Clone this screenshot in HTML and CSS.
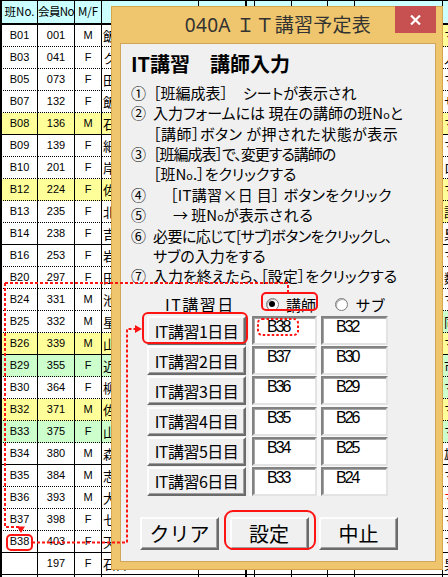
FILE: index.html
```html
<!DOCTYPE html>
<html lang="ja">
<head>
<meta charset="utf-8">
<title>040A ＩＴ講習予定表</title>
<link rel="stylesheet" href="styles.css">
</head>
<body>
<div class="sheet">
  <div class="r h"><span>班No.</span><span class="hn">会員No</span><span>M/F</span><span></span><span></span><span class="gap"></span><span></span><span></span><span></span><span></span><span class="x"></span></div>
  <div class="r"><span>B01</span><span>001</span><span>M</span><span class="nm">飯田</span><span></span><span class="gap"></span><span></span><span></span><span></span><span></span><span class="x y">マ</span></div>
  <div class="r"><span>B03</span><span>041</span><span>F</span><span class="nm">クロ</span><span></span><span class="gap"></span><span></span><span></span><span></span><span></span><span class="x">人</span></div>
  <div class="r"><span>B05</span><span>073</span><span>F</span><span class="nm">田中</span><span></span><span class="gap"></span><span></span><span></span><span></span><span></span><span class="x">マ</span></div>
  <div class="r"><span>B07</span><span>132</span><span>F</span><span class="nm">飯島</span><span></span><span class="gap"></span><span></span><span></span><span></span><span></span><span class="x">サ</span></div>
  <div class="r y s"><span>B08</span><span>136</span><span>M</span><span class="nm">石川</span><span></span><span class="gap"></span><span></span><span></span><span></span><span></span><span class="x">マ</span></div>
  <div class="r"><span>B09</span><span>139</span><span>F</span><span class="nm">細川</span><span></span><span class="gap"></span><span></span><span></span><span></span><span></span><span class="x">マ</span></div>
  <div class="r"><span>B10</span><span>201</span><span>F</span><span class="nm">岸本</span><span></span><span class="gap"></span><span></span><span></span><span></span><span></span><span class="x">ロ</span></div>
  <div class="r y"><span>B12</span><span>224</span><span>F</span><span class="nm">佐藤</span><span></span><span class="gap"></span><span></span><span></span><span></span><span></span><span class="x">マ</span></div>
  <div class="r"><span>B13</span><span>235</span><span>F</span><span class="nm">北村</span><span></span><span class="gap"></span><span></span><span></span><span></span><span></span><span class="x y">設</span></div>
  <div class="r s"><span>B14</span><span>238</span><span>F</span><span class="nm">吉田</span><span></span><span class="gap"></span><span></span><span></span><span></span><span></span><span class="x">梟</span></div>
  <div class="r"><span>B16</span><span>253</span><span>F</span><span class="nm">岩田</span><span></span><span class="gap"></span><span></span><span></span><span></span><span></span><span class="x">マ</span></div>
  <div class="r"><span>B20</span><span>297</span><span>F</span><span class="nm">田村</span><span></span><span class="gap"></span><span></span><span></span><span></span><span></span><span class="x">数</span></div>
  <div class="r"><span>B24</span><span>331</span><span>M</span><span class="nm">池田</span><span></span><span class="gap"></span><span></span><span></span><span></span><span></span><span class="x">マ</span></div>
  <div class="r"><span>B25</span><span>332</span><span>M</span><span class="nm">星野</span><span></span><span class="gap"></span><span></span><span></span><span></span><span></span><span class="x g">同</span></div>
  <div class="r y s"><span>B26</span><span>339</span><span>M</span><span class="nm">山田</span><span></span><span class="gap"></span><span></span><span></span><span></span><span></span><span class="x">マ</span></div>
  <div class="r g"><span>B29</span><span>355</span><span>F</span><span class="nm">近藤</span><span></span><span class="gap"></span><span></span><span></span><span></span><span></span><span class="x g">市</span></div>
  <div class="r"><span>B30</span><span>364</span><span>F</span><span class="nm">柳田</span><span></span><span class="gap"></span><span></span><span></span><span></span><span></span><span class="x g">マ</span></div>
  <div class="r y"><span>B32</span><span>371</span><span>M</span><span class="nm">佐々木</span><span></span><span class="gap"></span><span></span><span></span><span></span><span></span><span class="x">マ</span></div>
  <div class="r g"><span>B33</span><span>375</span><span>F</span><span class="nm">山本</span><span></span><span class="gap"></span><span></span><span></span><span></span><span></span><span class="x">マ</span></div>
  <div class="r s"><span>B34</span><span>380</span><span>M</span><span class="nm">森田</span><span></span><span class="gap"></span><span></span><span></span><span></span><span></span><span class="x">雄</span></div>
  <div class="r"><span>B35</span><span>384</span><span>M</span><span class="nm">志村</span><span></span><span class="gap"></span><span></span><span></span><span></span><span></span><span class="x">マ</span></div>
  <div class="r"><span>B36</span><span>393</span><span>M</span><span class="nm">大野</span><span></span><span class="gap"></span><span></span><span></span><span></span><span></span><span class="x red">マ</span></div>
  <div class="r"><span>B37</span><span>398</span><span>F</span><span class="nm">七海</span><span></span><span class="gap"></span><span></span><span></span><span></span><span></span><span class="x">マ</span></div>
  <div class="r s"><span>B38</span><span>403</span><span>F</span><span class="nm">天野</span><span></span><span class="gap"></span><span></span><span></span><span></span><span></span><span class="x">マ</span></div>
  <div class="r s"><span></span><span>197</span><span>F</span><span class="nm">石井</span><span></span><span class="gap"></span><span></span><span></span><span></span><span></span><span class="x">男</span></div>
  <div class="r"><span></span><span></span><span></span><span class="nm"></span><span></span><span class="gap"></span><span></span><span></span><span></span><span></span><span class="x"></span></div>
</div>

<div class="dlg">
  <div class="bar">
    <span class="title">040A ＩＴ講習予定表</span>
    <span class="close"><svg width="11" height="10" viewBox="0 0 11 10"><path d="M1 .5L10 9.5M10 .5L1 9.5" stroke="#fff" stroke-width="2.2" fill="none"/></svg></span>
  </div>
  <div class="client">
    <h1 class="head">IT講習　講師入力</h1>
    <div class="steps">
      <p><i>①</i><span>［班編成表］　シートが表示され</span></p>
      <p><i>②</i><span>入力フォームには 現在の講師の班N<span class="o">o</span>と</span></p>
      <p><i></i><span class="wide">［講師］ボタン が押された状態が表示</span></p>
      <p><i>③</i><span class="tight">［班編成表］で、変更する講師の</span></p>
      <p><i></i><span>［班N<span class="o">o</span>.］をクリックする</span></p>
      <p><i>④</i><span class="ind4">［IT講習×日 目］ ボタンをクリック</span></p>
      <p><i>⑤</i><span class="ind5">→ 班N<span class="o">o</span>が表示される</span></p>
      <p><i>⑥</i><span class="snug">必要に応じて[サブ]ボタンをクリックし、</span></p>
      <p><i></i><span>サブの入力をする</span></p>
      <p><i>⑦</i><span>入力を終えたら、［設定］をクリックする</span></p>
    </div>
    <div class="opts">
      <span class="lbl">IT講習日</span>
      <span class="rd r1"><span class="dot on"></span>講師</span>
      <span class="rd"><span class="dot"></span>サブ</span>
    </div>
    <div class="days">
      <button class="btn day">IT講習1日目</button><span class="tb a">B38</span><span class="tb b">B32</span>
      <button class="btn day">IT講習2日目</button><span class="tb a">B37</span><span class="tb b">B30</span>
      <button class="btn day">IT講習3日目</button><span class="tb a">B36</span><span class="tb b">B29</span>
      <button class="btn day">IT講習4日目</button><span class="tb a">B35</span><span class="tb b">B26</span>
      <button class="btn day">IT講習5日目</button><span class="tb a">B34</span><span class="tb b">B25</span>
      <button class="btn day">IT講習6日目</button><span class="tb a">B33</span><span class="tb b">B24</span>
    </div>
    <div class="acts">
      <button class="btn act">クリア</button>
      <button class="btn act">設定</button>
      <button class="btn act">中止</button>
    </div>
  </div>
</div>

<svg class="marks" width="448" height="577" viewBox="0 0 448 577">
  <g fill="none" stroke="#ff1414" stroke-width="2">
    <path d="M5 283H288V292" stroke-dasharray="3 2"/>
    <path d="M5 283V527H21V528" stroke-dasharray="3 2"/>
    <path d="M32 542.5H127V329H136" stroke-dasharray="3 2"/>
    <rect x="7" y="535" width="25" height="15" rx="4"/>
    <rect x="143" y="313" width="104" height="30" rx="5"/>
    <rect x="258" y="319" width="40" height="16" rx="4" stroke-dasharray="2.5 2"/>
    <rect x="262" y="293" width="55" height="17" rx="4"/>
    <rect x="225" y="511" width="90" height="38" rx="8"/>
  </g>
  <path d="M17 526.5H25L21 533Z" fill="#ff1414"/>
  <path d="M135 325V333L142 329Z" fill="#ff1414"/>
</svg>
</body>
</html>
```

FILE: styles.css
```css
html, body { margin: 0; padding: 0; }
body {
  width: 448px;
  height: 577px;
  overflow: hidden;
  position: relative;
  background: #fff;
  color: #000;
  font-family: "Noto Sans CJK JP", sans-serif;
}

/* spreadsheet */
.sheet { width: 448px; overflow: hidden; }
.r {
  display: grid;
  grid-template-columns: 38px 37px 27px 97px 47px 9px 37px 36px 27px 88px 5px;
  height: 22px;
}
.r > span {
  box-sizing: border-box;
  border-right: 1px solid #000;
  border-bottom: 1px dotted #000;
  display: flex;
  align-items: center;
  justify-content: center;
  font: 11px/1 "Liberation Sans", "Noto Sans CJK JP", sans-serif;
  white-space: nowrap;
  overflow: hidden;
}
.r > span:first-child { border-left: 2px solid #000; }
.r > span:last-child { border-right: 0; }
.r > span.gap { border-left: 1px solid #000; }
.r > span.nm, .r > span.x {
  justify-content: flex-start;
  padding-left: 1px;
  font: 13px/1 "Noto Sans CJK JP", sans-serif;
}
.r.s > span { border-bottom-style: solid; }
.r.h {
  height: 25px;
  box-sizing: border-box;
  border-top: 1px solid #000;
  background: #ccffff;
}
.r.h > span {
  border-bottom: 2px solid #000;
  font: 11.5px/1 "Noto Sans CJK JP", sans-serif;
}
.r.h > span.hn { letter-spacing: -.6px; }
.r.y { background: #ffff99; }
.r.g { background: #ccffcc; }
.r > span.x.y { background: #ffff99; }
.r > span.x.g { background: #ccffcc; }
.r > span.x.red { color: #f00; }

/* dialog window */
.dlg {
  position: absolute;
  left: 111px;
  top: 6px;
  width: 332px;
  height: 564px;
  box-sizing: border-box;
  background: #efc66d;
  border: 1px solid #d6a64c;
  padding: 0 6px 7px 8px;
  display: flex;
  flex-direction: column;
}
.bar {
  height: 36px;
  flex: none;
  position: relative;
  display: flex;
  align-items: center;
  justify-content: center;
}
.title {
  font: 19px/1 "Noto Sans", "Noto Sans CJK JP", sans-serif;
  letter-spacing: .3px;
  color: #323232;
}
.close {
  position: absolute;
  right: 0;
  top: -1px;
  width: 41px;
  height: 27px;
  background: #c75050;
  display: flex;
  align-items: center;
  justify-content: center;
}
.client {
  flex: 1;
  background: #f0f0f0;
  border: 1px solid #cfa65a;
  display: flex;
  flex-direction: column;
}
.head {
  margin: 8px 0 0 10px;
  font-size: 20px;
  line-height: 24px;
  font-weight: 700;
}
.steps {
  margin: 6.5px 0 0 10px;
  font-size: 15px;
  line-height: 20px;
  font-feature-settings: "palt";
}
.steps p { margin: 0; display: flex; white-space: nowrap; }
.steps i {
  font-style: normal;
  width: 22px;
  flex: none;
  font-feature-settings: normal;
}
.o { font-size: .72em; }
.wide { letter-spacing: .5px; }
.tight { letter-spacing: -1px; }
.snug { letter-spacing: -.55px; }
.ind4 { padding-left: 17px; letter-spacing: .3px; }
.ind5 { padding-left: 20px; font-feature-settings: normal; }

.opts {
  display: flex;
  align-items: center;
  height: 20px;
  margin: 8.5px 0 0 44px;
  font-size: 15px;
}
.lbl {
  width: 100.5px;
  font-size: 16px;
  letter-spacing: 1.5px;
  text-decoration: underline;
  text-underline-offset: 2px;
}
.rd { display: flex; align-items: center; }
.r1 { width: 69.5px; }
.dot {
  position: relative;
  width: 13px;
  height: 13px;
  box-sizing: border-box;
  border-radius: 50%;
  border: 1px solid #7a7a7a;
  background: #fff;
  box-shadow: inset 1px 1px 0 #b0b0b0;
  margin-right: 7.5px;
}
.dot.on::after {
  content: "";
  position: absolute;
  left: 2.5px;
  top: 2.5px;
  width: 6px;
  height: 6px;
  border-radius: 50%;
  background: #000;
}

.days {
  display: grid;
  grid-template-columns: 99px 71px 71px;
  grid-auto-rows: 29px;
  row-gap: 1.2px;
  width: 241px;
  margin: 2px 0 0 26px;
  background: linear-gradient(#f9f9f9, #f9f9f9) 102px 0 / 143px 100% no-repeat;
}
.btn {
  box-sizing: border-box;
  margin: 0;
  padding: 0;
  background: #f0f0f0;
  border-style: solid;
  border-width: 2px;
  border-color: #fdfdfd #6b6b6b #6b6b6b #fdfdfd;
  box-shadow: inset -1px -1px 0 #a0a0a0;
  font-family: "Noto Sans CJK JP", sans-serif;
  color: #000;
  display: flex;
  align-items: center;
  justify-content: center;
}
.day { font-size: 16px; letter-spacing: -.5px; }
.tb {
  box-sizing: border-box;
  border: 2px solid;
  border-color: #828282 #e3e3e3 #e3e3e3 #828282;
  box-shadow: inset 1px 1px 0 #a5a5a5;
  background: #fff;
  font: 16px/16px "Liberation Sans", sans-serif;
  letter-spacing: -2px;
  padding: 1px 0 0 13px;
}
.tb.a { margin-left: 6px; }
.tb.b { margin-left: 4px; }

.acts {
  display: flex;
  gap: 10.5px;
  margin: 21px 0 0 19px;
}
.act { width: 79px; height: 33px; font-size: 20px; }

/* red annotation overlay */
.marks {
  position: absolute;
  left: 0;
  top: 0;
  pointer-events: none;
}
```
